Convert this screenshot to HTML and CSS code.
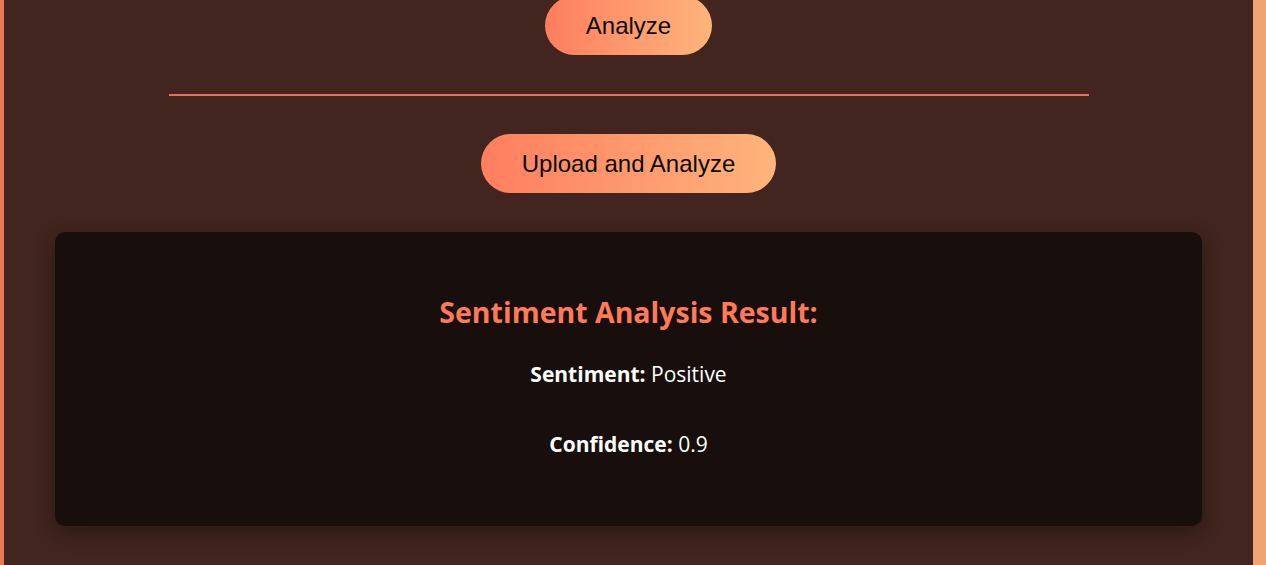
FILE: index.html
```html
<!DOCTYPE html>
<html lang="en">
<head>
<meta charset="utf-8">
<title>Sentiment Analysis</title>
<link rel="stylesheet" href="styles.css">
</head>
<body>
  <div class="page">
    <main class="container">
      <section class="analyze-block">
        <button class="btn">Analyze</button>
      </section>
      <hr class="divider">
      <section class="upload-block">
        <button class="btn">Upload and Analyze</button>
      </section>
      <section class="result-card">
        <h2 class="result-title">Sentiment Analysis Result:</h2>
        <p class="result-line"><strong>Sentiment:</strong> Positive</p>
        <p class="result-line result-line-second"><strong>Confidence:</strong> 0.9</p>
      </section>
    </main>
  </div>
</body>
</html>
```

FILE: styles.css
```css
html, body {
  margin: 0;
  padding: 0;
  height: 100%;
  overflow: hidden;
}

body {
  background: linear-gradient(to right, #ea7757, #f0a473);
  font-family: "Liberation Sans", Arial, sans-serif;
}

.page {
  padding: 0 13px 0 4px;
  height: 100%;
}

.container {
  background: #41251e;
  height: 100%;
  padding: 0 51px;
  display: flex;
  flex-direction: column;
  align-items: stretch;
}

.analyze-block,
.upload-block {
  display: flex;
  justify-content: center;
}

.analyze-block {
  margin-top: -4px;
}

.btn {
  font-family: "Liberation Sans", Arial, sans-serif;
  font-size: 24px;
  line-height: 29px;
  color: #0a0a0a;
  border: none;
  border-radius: 30px;
  padding: 15px 40.5px;
  background: linear-gradient(to right, #ff7e5f, #feb47b);
  cursor: pointer;
}

.divider {
  border: none;
  height: 2px;
  background: #e9714f;
  width: 920px;
  margin: 39px auto 38px;
}

.result-card {
  margin-top: 39px;
  background: #180f0c;
  border-radius: 10px;
  box-shadow: 0 6px 20px rgba(0, 0, 0, 0.35);
  padding: 61px 20px 68px;
  text-align: center;
  color: #fff;
  font-family: "Open Sans", "Noto Sans", sans-serif;
}

.result-title {
  margin: 0;
  font-size: 28.5px;
  line-height: 38px;
  font-weight: 700;
  color: #ff7a59;
}

.result-line {
  margin: 29px 0 0;
  font-size: 21px;
  line-height: 28px;
}

.result-line-second {
  margin-top: 42px;
}

.result-line strong {
  font-weight: 700;
}
```
